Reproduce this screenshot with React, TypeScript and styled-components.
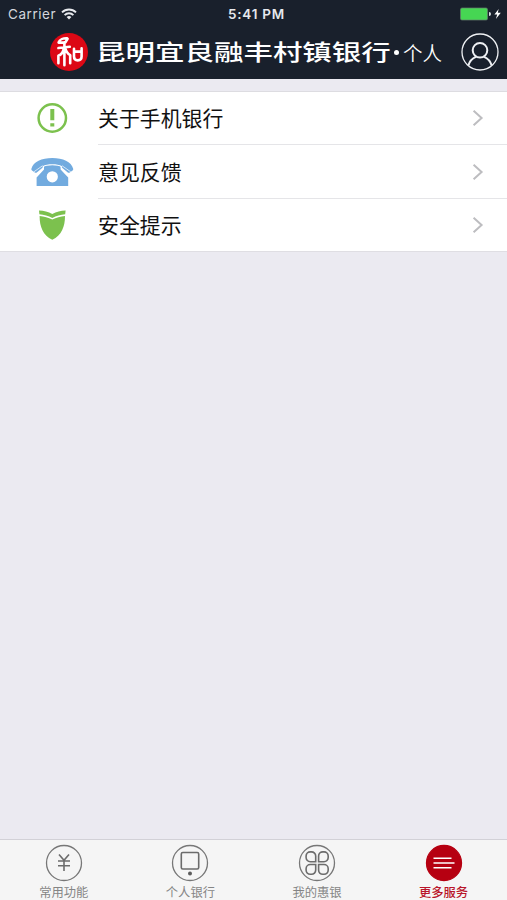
import React from "react";
import styled, { createGlobalStyle } from "styled-components";

const GlobalStyle = createGlobalStyle`
  * { box-sizing: border-box; }
  body {
    margin: 0;
    overflow: hidden;
    background: #ebeaf1;
    font-family: "Noto Sans CJK SC", sans-serif;
  }
  svg { display: block; flex: none; }
`;

const Screen = styled.div`
  width: 507px;
  height: 900px;
  display: flex;
  flex-direction: column;
  background: #ebeaf1;
`;

const Header = styled.header`
  height: 79px;
  flex: none;
  background: #19202c;
  color: #fff;
`;

const StatusBar = styled.div`
  height: 27px;
  display: grid;
  grid-template-columns: 1fr auto 1fr;
  align-items: center;
  padding: 1px 5px 0 8px;
  font-family: Inter, sans-serif;
  font-size: 13.5px;
  line-height: 26px;
  color: #e6e8ec;
`;

const Carrier = styled.div`
  display: flex;
  align-items: center;
  gap: 5px;
  color: #d3d6dc;
  letter-spacing: 0.55px;
`;

const Clock = styled.div`
  font-weight: 600;
  font-size: 13.5px;
  letter-spacing: 0.8px;
  padding-left: 3px;
`;

const Power = styled.div`
  display: flex;
  justify-content: flex-end;
`;

const TitleBar = styled.div`
  height: 52px;
  display: flex;
  align-items: center;
  padding: 0 8px 2px 50px;
`;

const BankName = styled.h1`
  margin: 0 0 0 8px;
  width: 295px;
  height: 30px;
  line-height: 27px;
  font-size: 22px;
  font-weight: 500;
  white-space: nowrap;
  transform: scaleX(1.34);
  transform-origin: left center;
`;

const Dot = styled.span`
  width: 5px;
  height: 5px;
  border-radius: 50%;
  background: #fff;
  margin: 1px 4px 0 3px;
`;

const Segment = styled.span`
  font-size: 19.5px;
  font-weight: 350;
  line-height: 30px;
  width: 58px;
  padding-top: 1px;
  white-space: nowrap;
`;

const List = styled.main`
  margin-top: 12px;
  height: 161px;
  flex: none;
  border-top: 1px solid #dddce1;
  border-bottom: 1px solid #dfdee3;
  background: #fff;
`;

const Row = styled.div`
  height: 54px;
  display: flex;
  align-items: stretch;
  &:first-child { height: 53px; }
  &:last-child { height: 52px; }
`;

const RowIcon = styled.div<{ $drop?: boolean }>`
  width: 98px;
  flex: none;
  display: flex;
  align-items: center;
  padding: 0 0 ${(p) => (p.$drop ? 0 : 2)}px 30px;
`;

const RowBody = styled.div<{ $last?: boolean }>`
  flex: 1;
  display: flex;
  align-items: center;
  justify-content: space-between;
  padding-right: 23px;
  border-bottom: ${(p) => (p.$last ? "0" : "1px solid #e5e5e8")};
  font-size: 20.9px;
  line-height: 30px;
  color: #111;
`;

const RowLabel = styled.span`
  padding-bottom: 2px;
`;

const Tabs = styled.nav`
  margin-top: auto;
  height: 61px;
  flex: none;
  display: grid;
  grid-template-columns: repeat(4, 126.6px);
  padding-left: 0.5px;
  border-top: 1px solid #d2d1d7;
  background: #f5f5f5;
`;

const Tab = styled.div<{ $active?: boolean }>`
  display: flex;
  flex-direction: column;
  align-items: center;
  padding-top: 4px;
  color: ${(p) => (p.$active ? "#b9152a" : "#858585")};
  font-weight: ${(p) => (p.$active ? 500 : 400)};
  font-size: 12.3px;
  line-height: 18px;
`;

const TabLabel = styled.span`
  margin-top: 1px;
`;

const WifiIcon = () => (
  <svg width="16" height="12" viewBox="0 0 16 12" fill="none" stroke="#e8eaee" strokeWidth="1.9">
    <path d="M1 4.4a10 10 0 0 1 14 0M3.6 7.1a6.2 6.2 0 0 1 8.8 0" />
    <path d="M8 11.5 5.6 9.1a3.4 3.4 0 0 1 4.8 0Z" fill="#e8eaee" stroke="none" />
  </svg>
);

const BatteryIcon = () => (
  <svg width="42" height="14" viewBox="0 0 42 14">
    <rect x="0.5" y="1" width="27" height="12" rx="1.5" fill="#46d653" stroke="#65806e" strokeWidth="0.7" />
    <path d="M29 5q2 0 2 2t-2 2Z" fill="#d9dde2" />
    <path d="m38.7 2-4.3 5.4h2.8L35.9 12l4.9-6.2h-3Z" fill="#fff" />
  </svg>
);

const BankLogo = () => (
  <svg width="38" height="40" viewBox="0 0 38 40" fill="none">
    <circle cx="19" cy="20" r="19" fill="#dc0815" />
    <g stroke="#fff" strokeWidth="2.6" strokeLinecap="round" strokeLinejoin="round">
      <path d="M8.6 10.4c1-2.9 4.9-4.4 8.6-4.1M8.8 10.6l6.600-.2 2.200-3.600M14.400 10.400v22.900M8.400 16l11.400-1.200M13.800 15.800c-.4 4.400-2.200 6.600-5.400 8v7.400M15.200 15.800c1 4.200 2.200 6 5 7.400v8" />
      <path d="M24 16.800v7.800c0 2.700 1 3.800 3.700 3.800 2.900 0 3.900-1.200 3.900-3.800v-8.200M24 19.600h7.600" />
    </g>
  </svg>
);

const UserIcon = () => (
  <svg width="38" height="38" viewBox="0 0 38 38" fill="none" stroke="#eef0f3">
    <circle cx="19" cy="19" r="18" strokeWidth="1.3" />
    <circle cx="19" cy="17.3" r="7.3" strokeWidth="2" />
    <path d="M7.4 32.4c1.3-4.4 4.3-7.2 7.6-8.5M30.6 32.4c-1.3-4.4-4.3-7.2-7.6-8.5" strokeWidth="2" />
  </svg>
);

const NoticeIcon = () => (
  <svg width="44" height="34" viewBox="0 0 44 34" fill="none">
    <circle cx="22.3" cy="17" r="13.7" stroke="#7cc14e" strokeWidth="2.5" />
    <path d="M20.3 8h4v11.2h-4ZM20.3 22.2h4v3.2h-4Z" fill="#7cc14e" />
  </svg>
);

const PhoneIcon = () => (
  <svg width="44" height="30" viewBox="0 0 44 30">
    <path
      fillRule="evenodd"
      d="M14 8h16.6v4.4l7.6 8V29H6.6v-8.6l7.4-8ZM22.3 14.2a5.6 5.6 0 1 0 0 11.2 5.6 5.6 0 0 0 0-11.2Z"
      fill="#72abdf"
    />
    <path
      d="M1.4 11.8C3.4 4.6 11.6 1 22.3 1s18.9 3.6 20.9 10.8c.2.8 0 1.3-.6 1.7l-2.8 2c-.7.5-1.4.4-2-.1l-5.4-4.3c-.6-.5-.7-1.1-.4-1.8-2.4-1.6-5.9-2.1-9.7-2.1s-7.3.5-9.7 2.1c.3.7.2 1.3-.4 1.8l-5.4 4.3c-.6.5-1.3.6-2 .1l-2.8-2c-.6-.4-.8-.9-.6-1.7Z"
      fill="#72abdf"
      stroke="#fff"
      strokeWidth="2"
      paintOrder="stroke"
    />
    <path d="m3.8 14.9 8.8-6.2M40.8 14.9 32 8.7" fill="none" stroke="#fff" strokeWidth="0.7" />
  </svg>
);

const ShieldIcon = () => (
  <svg width="44" height="34" viewBox="0 0 44 34" fill="#7cc14e">
    <path d="M9 2.4c4.9.3 9.2 1.3 13.3 3.5 4.1-2.2 8.400-3.200 13.300-3.500l-.4 3.800c-4.600.4-8.900 1.500-12.900 3.700-4-2.200-8.300-3.300-12.900-3.700Z" />
    <path d="M9.600 7.900c4.600.4 8.700 1.500 12.700 3.700 4-2.200 8.100-3.300 12.700-3.700 0 10.700-3.500 19.500-12.700 23.900C13.100 27.400 9.600 18.600 9.600 7.900Z" />
  </svg>
);

const ChevronIcon = () => (
  <svg width="12" height="18" viewBox="0 0 12 18" fill="none" stroke="#bdbdc0" strokeWidth="2">
    <path d="m1.6 1.7 8 7.3-8 7.3" />
  </svg>
);

const TabGlyph = ({ active, children }: { active?: boolean; children: React.ReactNode }) => (
  <svg width="38" height="38" viewBox="0 0 38 38" fill="none" stroke={active ? "#fff" : "#6c6c6c"}>
    <circle
      cx="19"
      cy="19"
      r="17.5"
      fill={active ? "#b60011" : "none"}
      stroke={active ? "#b60011" : "#777"}
      strokeWidth="1.3"
    />
    {children}
  </svg>
);

const rows = [
  { label: "关于手机银行", icon: <NoticeIcon /> },
  { label: "意见反馈", icon: <PhoneIcon />, drop: true },
  { label: "安全提示", icon: <ShieldIcon />, drop: true },
];

const tabs = [
  {
    label: "常用功能",
    glyph: <path d="m14 10.5 5 5.8 5-5.8M13 17h12M13 21.7h12M19 16.3V27" strokeWidth="1.6" />,
  },
  {
    label: "个人银行",
    glyph: (
      <>
        <rect x="10.3" y="8.5" width="17.4" height="16.5" rx="1.5" strokeWidth="1.6" />
        <circle cx="19" cy="29.6" r="2" fill="#5b5b5b" stroke="none" />
      </>
    ),
  },
  {
    label: "我的惠银",
    glyph: (
      <path
        d="M17.7 17.7h-5.4a4.2 4.2 0 0 1-4.2-4.2v-1.4a4.2 4.2 0 0 1 4.2-4.2h1.2a4.2 4.2 0 0 1 4.2 4.2ZM20.6 17.7H26a4.2 4.2 0 0 0 4.2-4.2v-1.4A4.2 4.2 0 0 0 26 7.9h-1.2a4.2 4.2 0 0 0-4.2 4.2ZM17.7 20.5h-5.4a4.2 4.2 0 0 0-4.2 4.2v1.4a4.2 4.2 0 0 0 4.2 4.2h1.2a4.2 4.2 0 0 0 4.2-4.2ZM20.6 20.5H26a4.2 4.2 0 0 1 4.2 4.2v1.4a4.2 4.2 0 0 1-4.2 4.2h-1.2a4.2 4.2 0 0 1-4.2-4.2Z"
        strokeWidth="1.6"
      />
    ),
  },
  {
    label: "更多服务",
    active: true,
    glyph: <path d="M8.5 14.3h18M8.5 19h21M8.5 23.7h18" strokeWidth="1.6" />,
  },
];

export default function App() {
  return (
    <>
      <GlobalStyle />
      <Screen>
        <Header>
          <StatusBar>
            <Carrier>
              Carrier
              <WifiIcon />
            </Carrier>
            <Clock>5:41 PM</Clock>
            <Power>
              <BatteryIcon />
            </Power>
          </StatusBar>
          <TitleBar>
            <BankLogo />
            <BankName>昆明宜良融丰村镇银行</BankName>
            <Dot />
            <Segment>个人</Segment>
            <UserIcon />
          </TitleBar>
        </Header>
        <List>
          {rows.map((row, i) => (
            <Row key={row.label}>
              <RowIcon $drop={row.drop}>{row.icon}</RowIcon>
              <RowBody $last={i === rows.length - 1}>
                <RowLabel>{row.label}</RowLabel>
                <ChevronIcon />
              </RowBody>
            </Row>
          ))}
        </List>
        <Tabs>
          {tabs.map((tab) => (
            <Tab key={tab.label} $active={tab.active}>
              <TabGlyph active={tab.active}>{tab.glyph}</TabGlyph>
              <TabLabel>{tab.label}</TabLabel>
            </Tab>
          ))}
        </Tabs>
      </Screen>
    </>
  );
}
